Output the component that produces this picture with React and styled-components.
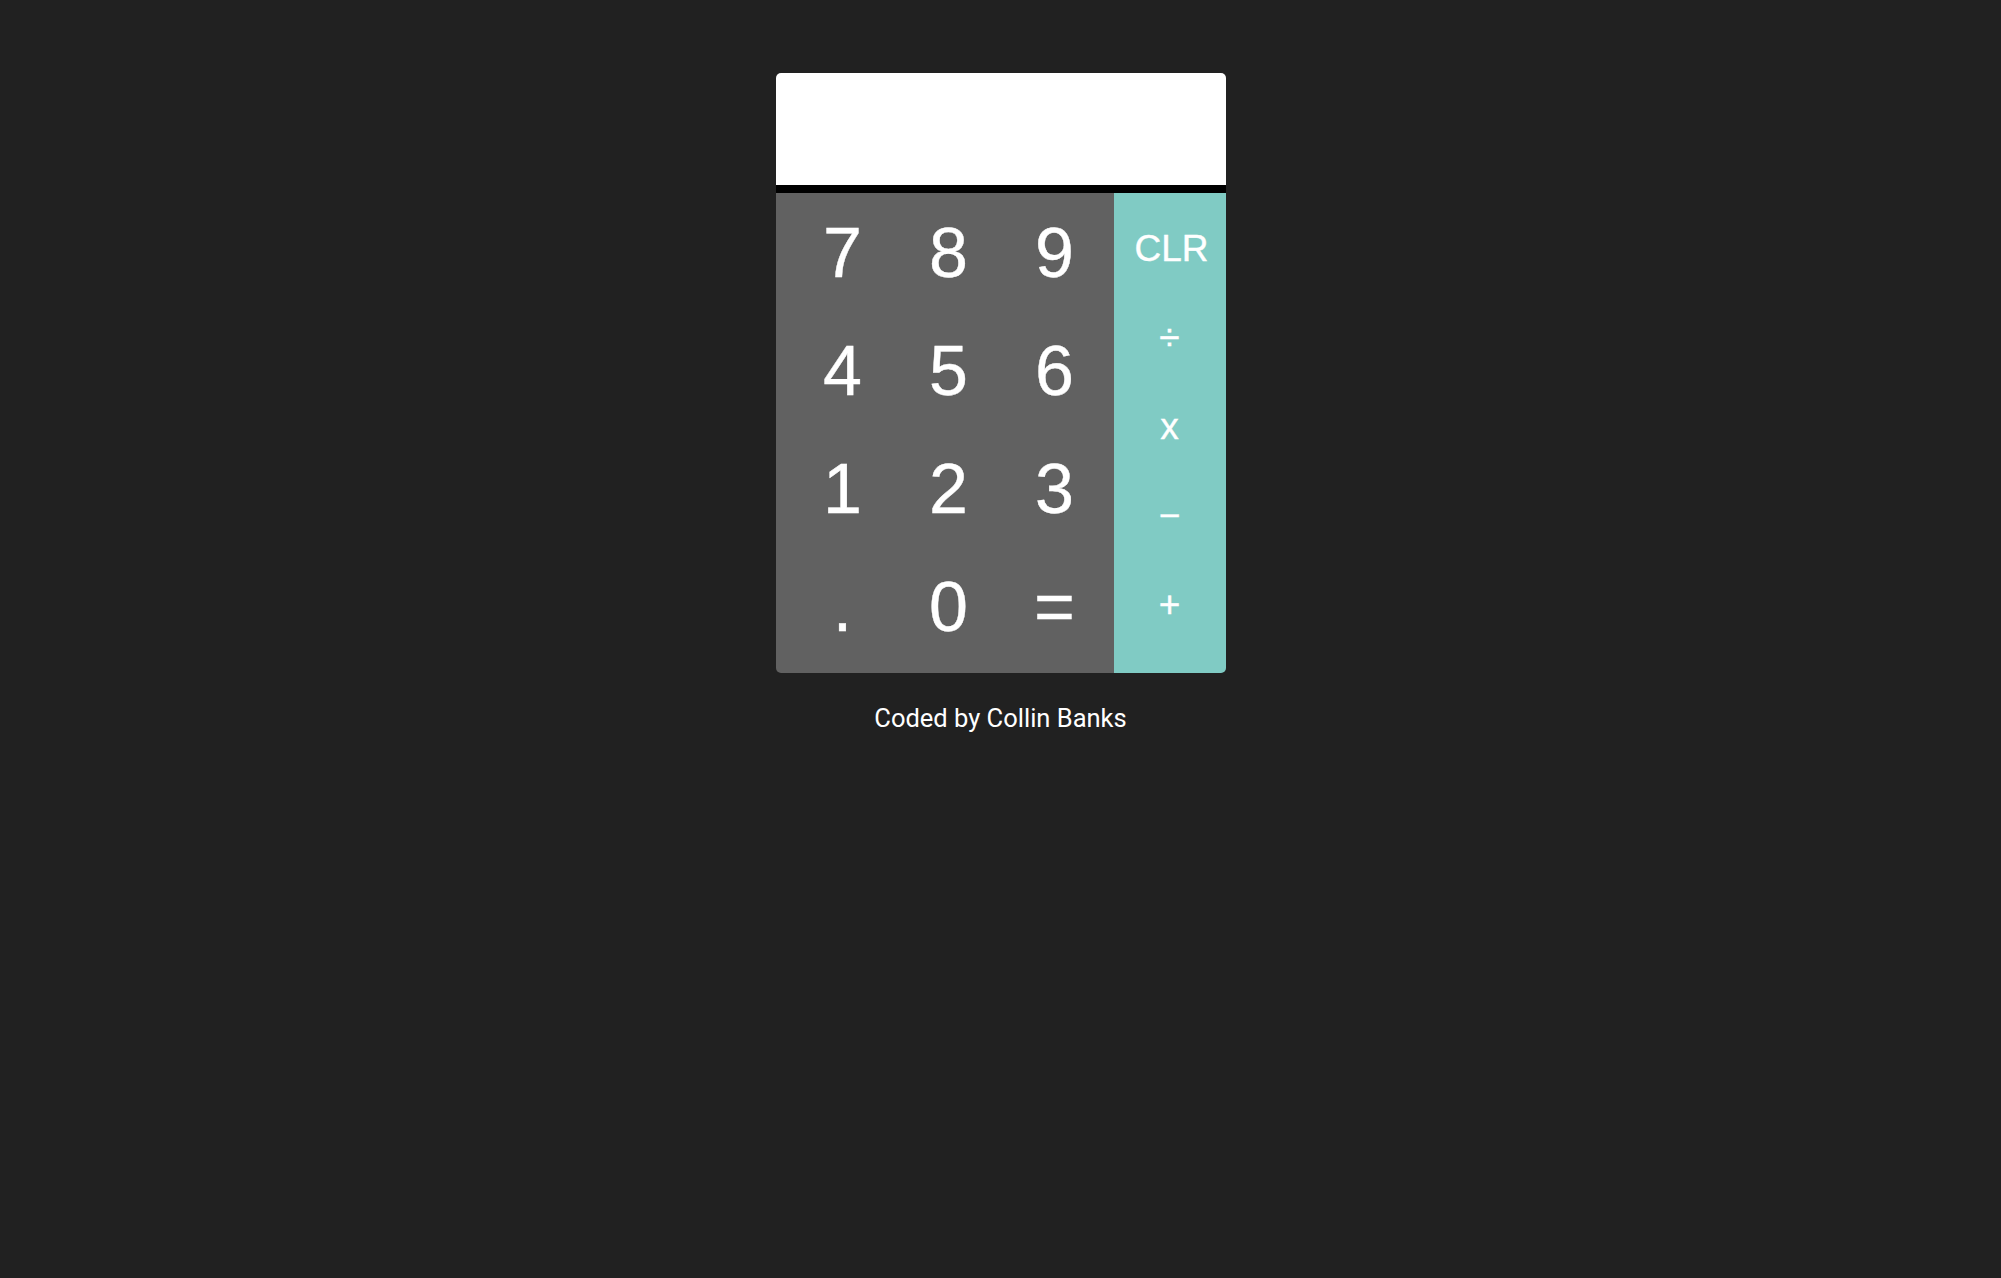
import React, { useState } from 'react';
import styled, { createGlobalStyle } from 'styled-components';

const GlobalStyle = createGlobalStyle`
  html, body {
    margin: 0;
    padding: 0;
    background: #212121;
  }
`;

const Page = styled.div`
  min-height: 100vh;
  padding-top: 73px;
  box-sizing: border-box;
  display: flex;
  flex-direction: column;
  align-items: center;
`;

const Calculator = styled.div`
  width: 450px;
  border-radius: 5px;
  overflow: hidden;
  font-family: "Liberation Sans", Arial, sans-serif;
`;

const Display = styled.div`
  height: 112px;
  background: #ffffff;
  border-bottom: 8px solid #000000;
  display: flex;
  align-items: center;
  justify-content: flex-end;
  padding: 0 20px;
  font-size: 56px;
  color: #212121;
`;

const Keypad = styled.div`
  display: flex;
  height: 480px;
`;

const Digits = styled.div`
  flex: 0 0 338px;
  background: #616161;
  box-sizing: border-box;
  padding: 1px 6px 7px 14px;
  display: grid;
  grid-template-columns: repeat(3, 1fr);
  grid-template-rows: repeat(4, 1fr);
`;

const Operators = styled.div`
  flex: 1;
  background: #80cbc4;
  padding-top: 11px;
  display: flex;
  flex-direction: column;
`;

const Key = styled.button`
  border: none;
  background: transparent;
  color: #ffffff;
  font-family: inherit;
  font-size: ${({ $op }) => ($op ? '37px' : '70px')};
  height: ${({ $op }) => ($op ? '89px' : 'auto')};
  padding: 0;
  display: flex;
  align-items: center;
  justify-content: center;
  cursor: pointer;
  outline: none;
  -webkit-text-stroke: 0.4px #ffffff;
`;

const ClearKey = styled(Key)`
  padding-left: 4px;
`;

const Footer = styled.p`
  margin: 30px 0 0;
  color: #ffffff;
  font-family: Roboto, "Noto Sans", sans-serif;
  font-size: 25.5px;
`;

const digits = ['7', '8', '9', '4', '5', '6', '1', '2', '3', '.', '0', '='];
const ops = ['÷', 'x', '−', '+'];

const App = () => {
  const [value, setValue] = useState('');

  const press = (k) => {
    if (k === 'CLR') return setValue('');
    if (k === '=') {
      try {
        const expr = value.replace(/÷/g, '/').replace(/x/g, '*').replace(/−/g, '-');
        // eslint-disable-next-line no-new-func
        setValue(String(Function(`return (${expr})`)()));
      } catch (e) {
        setValue('');
      }
      return;
    }
    setValue((prev) => prev + k);
  };

  return (
    <Page>
      <GlobalStyle />
      <Calculator>
        <Display>{value}</Display>
        <Keypad>
          <Digits>
            {digits.map((d) => (
              <Key key={d} onClick={() => press(d)}>{d}</Key>
            ))}
          </Digits>
          <Operators>
            <ClearKey $op onClick={() => press('CLR')}>CLR</ClearKey>
            {ops.map((o) => (
              <Key key={o} $op onClick={() => press(o)}>{o}</Key>
            ))}
          </Operators>
        </Keypad>
      </Calculator>
      <Footer>Coded by Collin Banks</Footer>
    </Page>
  );
};

export default App;
